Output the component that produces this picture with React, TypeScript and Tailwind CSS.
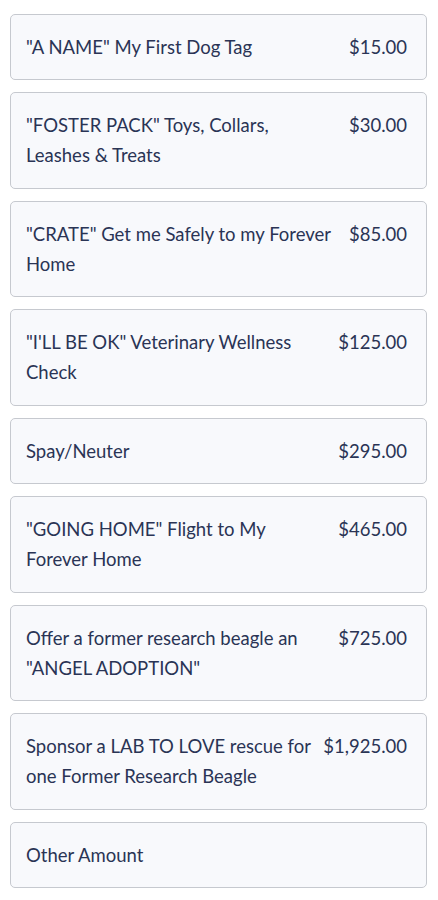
const levels = [
  { label: '"A NAME" My First Dog Tag', price: "$15.00" },
  { label: '"FOSTER PACK" Toys, Collars, Leashes & Treats', price: "$30.00" },
  { label: '"CRATE" Get me Safely to my Forever Home', price: "$85.00" },
  { label: '"I\'LL BE OK" Veterinary Wellness Check', price: "$125.00" },
  { label: "Spay/Neuter", price: "$295.00" },
  { label: '"GOING HOME" Flight to My Forever Home', price: "$465.00" },
  { label: 'Offer a former research beagle an "ANGEL ADOPTION"', price: "$725.00" },
  { label: "Sponsor a LAB TO LOVE rescue for one Former Research Beagle", price: "$1,925.00" },
  { label: "Other Amount", price: "" },
];

export default function App() {
  return (
    <div className="min-h-screen bg-white px-[10px] pt-[13.5px] font-['Lato',sans-serif] text-[18.5px] text-[#2a3455]">
      {levels.map((l) => (
        <button
          key={l.label}
          className="mb-[12px] flex w-[417px] items-start justify-between rounded-[5px] border border-[#c6c9cf] bg-[#f8f9fc] py-[17.25px] pl-[15px] pr-[19px] text-left leading-[30px]"
        >
          <span className="flex-1">{l.label}</span>
          {l.price && <span className="ml-[12px] shrink-0">{l.price}</span>}
        </button>
      ))}
    </div>
  );
}
